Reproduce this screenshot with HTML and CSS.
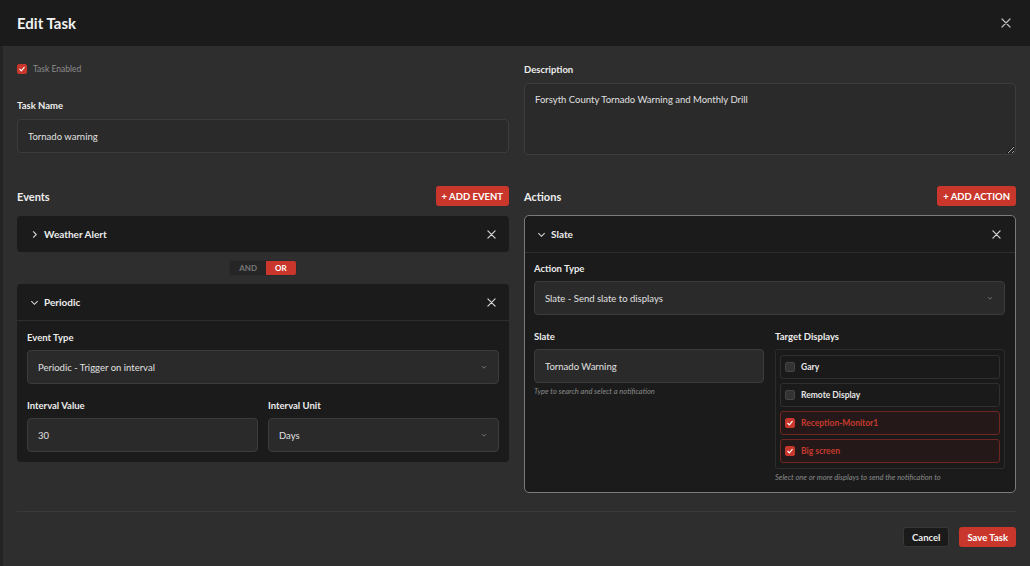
FILE: index.html
```html
<!DOCTYPE html>
<html>
<head>
  <link rel="stylesheet" href="styles.css">
</head>
<body>
  <div class="modal">
    <header class="modal-header">
      <h1>Edit Task</h1>
      <button class="icon-btn close-btn">
        <svg width="10" height="10" viewBox="0 0 10 10"><path d="M1 1L9 9M9 1L1 9" /></svg>
      </button>
    </header>

    <div class="modal-body">
      <div class="grid">
        <div class="col">
          <label class="check-row">
            <span class="check on"><svg viewBox="0 0 10 10"><path d="M2.2 5.3l2 2L7.8 3" /></svg></span>
            Task Enabled
          </label>
          <div class="field name-field">
            <label class="label">Task Name</label>
            <input class="input" type="text" value="Tornado warning">
          </div>
        </div>

        <div class="col">
          <div class="field">
            <label class="label">Description</label>
            <textarea class="input textarea">Forsyth County Tornado Warning and Monthly Drill</textarea>
          </div>
        </div>

        <!-- Events -->
        <section class="section">
          <div class="section-head">
            <h2>Events</h2>
            <button class="btn btn-red">+ ADD EVENT</button>
          </div>

          <div class="card">
            <div class="card-head collapsed">
              <svg class="chev" viewBox="0 0 10 10"><path d="M3.5 1.5L7 5l-3.5 3.5" /></svg>
              <span class="card-title">Weather Alert</span>
              <button class="icon-btn"><svg width="9" height="9" viewBox="0 0 10 10"><path d="M1 1L9 9M9 1L1 9" /></svg></button>
            </div>
          </div>

          <div class="toggle">
            <span class="toggle-opt">AND</span>
            <span class="toggle-opt active">OR</span>
          </div>

          <div class="card">
            <div class="card-head">
              <svg class="chev" viewBox="0 0 10 10"><path d="M1.5 3.5L5 7l3.5-3.5" /></svg>
              <span class="card-title">Periodic</span>
              <button class="icon-btn"><svg width="9" height="9" viewBox="0 0 10 10"><path d="M1 1L9 9M9 1L1 9" /></svg></button>
            </div>
            <div class="card-body">
              <div class="field">
                <label class="label">Event Type</label>
                <div class="input select">
                  <span>Periodic - Trigger on interval</span>
                  <svg class="select-chev" viewBox="0 0 10 10"><path d="M2.5 4L5 6.5 7.5 4" /></svg>
                </div>
              </div>
              <div class="row-2">
                <div class="field">
                  <label class="label">Interval Value</label>
                  <input class="input" type="text" value="30">
                </div>
                <div class="field">
                  <label class="label">Interval Unit</label>
                  <div class="input select">
                    <span>Days</span>
                    <svg class="select-chev" viewBox="0 0 10 10"><path d="M2.5 4L5 6.5 7.5 4" /></svg>
                  </div>
                </div>
              </div>
            </div>
          </div>
        </section>

        <!-- Actions -->
        <section class="section">
          <div class="section-head">
            <h2>Actions</h2>
            <button class="btn btn-red">+ ADD ACTION</button>
          </div>

          <div class="card card-active">
            <div class="card-head">
              <svg class="chev" viewBox="0 0 10 10"><path d="M1.5 3.5L5 7l3.5-3.5" /></svg>
              <span class="card-title">Slate</span>
              <button class="icon-btn"><svg width="9" height="9" viewBox="0 0 10 10"><path d="M1 1L9 9M9 1L1 9" /></svg></button>
            </div>
            <div class="card-body">
              <div class="field">
                <label class="label">Action Type</label>
                <div class="input select">
                  <span>Slate - Send slate to displays</span>
                  <svg class="select-chev" viewBox="0 0 10 10"><path d="M2.5 4L5 6.5 7.5 4" /></svg>
                </div>
              </div>
              <div class="row-2">
                <div class="field">
                  <label class="label">Slate</label>
                  <input class="input" type="text" value="Tornado Warning">
                  <p class="hint">Type to search and select a notification</p>
                </div>
                <div class="field">
                  <label class="label">Target Displays</label>
                  <div class="display-list">
                    <label class="display"><span class="check"></span>Gary</label>
                    <label class="display"><span class="check"></span>Remote Display</label>
                    <label class="display selected">
                      <span class="check on"><svg viewBox="0 0 10 10"><path d="M2.2 5.3l2 2L7.8 3" /></svg></span>
                      Reception-Monitor1
                    </label>
                    <label class="display selected">
                      <span class="check on"><svg viewBox="0 0 10 10"><path d="M2.2 5.3l2 2L7.8 3" /></svg></span>
                      Big screen
                    </label>
                  </div>
                  <p class="hint">Select one or more displays to send the notification to</p>
                </div>
              </div>
            </div>
          </div>
        </section>
      </div>

      <footer class="modal-footer">
        <button class="btn btn-dark">Cancel</button>
        <button class="btn btn-red btn-save">Save Task</button>
      </footer>
    </div>
  </div>
</body>
</html>
```

FILE: styles.css
```css
* {
  box-sizing: border-box;
}

html, body {
  margin: 0;
  height: 100%;
}

body {
  font-family: Lato, "Liberation Sans", sans-serif;
  background-color: #2e2e2e;
  color: #e6e6e6;
}

.modal {
  width: 1030px;
  height: 566px;
  display: flex;
  flex-direction: column;
  background-color: #2e2e2e;
}

/* Header */
.modal-header {
  height: 46px;
  flex-shrink: 0;
  display: flex;
  align-items: center;
  justify-content: space-between;
  padding: 0 19px 0 17px;
  background-color: #1b1b1b;
}

.modal-header h1 {
  margin: 0;
  font-size: 15px;
  font-weight: 700;
  color: #f2f2f2;
}

.icon-btn {
  background: none;
  border: none;
  padding: 0;
  display: flex;
  cursor: pointer;
}

.icon-btn svg {
  fill: none;
  stroke: #d8d8d8;
  stroke-width: 1.3;
  stroke-linecap: round;
}

.close-btn svg {
  stroke: #bdbdbd;
  stroke-width: 1.2;
}

/* Body */
.modal-body {
  flex: 1;
  padding: 18px 14px 0 14px;
  border-left: 3px solid #242424;
}

.grid {
  display: grid;
  grid-template-columns: 1fr 1fr;
  grid-template-rows: 90px auto;
  column-gap: 15px;
  row-gap: 32px;
}

.col {
  display: flex;
  flex-direction: column;
}

.check-row {
  display: flex;
  align-items: center;
  gap: 6px;
  height: 10px;
  font-size: 8.5px;
  color: #8c8c8c;
}

.check {
  width: 10px;
  height: 10px;
  flex-shrink: 0;
  border-radius: 2px;
  background-color: #333;
  border: 1px solid #454545;
  display: flex;
  align-items: center;
  justify-content: center;
}

.check.on {
  background-color: #c9372c;
  border-color: #c9372c;
}

.check svg {
  width: 10px;
  height: 10px;
  fill: none;
  stroke: #fff;
  stroke-width: 1.4;
  stroke-linecap: round;
  stroke-linejoin: round;
}

.name-field {
  margin-top: 26px;
}

.field {
  display: flex;
  flex-direction: column;
}

.label {
  font-size: 9.5px;
  font-weight: 700;
  line-height: 12px;
  color: #ececec;
  margin-bottom: 7px;
}

.input {
  height: 34px;
  width: 100%;
  padding: 0 10px;
  font-family: inherit;
  font-size: 9.5px;
  color: #e0e0e0;
  background-color: #2a2a2a;
  border: 1px solid #3c3c3c;
  border-radius: 4px;
  outline: none;
}

.textarea {
  height: 72px;
  padding: 9px 10px;
  resize: vertical;
  line-height: 14px;
}

.select {
  display: flex;
  align-items: center;
  justify-content: space-between;
}

.select-chev {
  width: 8px;
  height: 8px;
  fill: none;
  stroke: #8a8a8a;
  stroke-width: 1;
}

/* Sections */
.section-head {
  display: flex;
  align-items: center;
  justify-content: space-between;
  height: 20px;
  margin-bottom: 10px;
}

.section-head h2 {
  margin: 0;
  font-size: 11px;
  font-weight: 700;
  color: #ededed;
}

.btn {
  height: 20px;
  padding: 0 7px;
  font-family: inherit;
  font-size: 9.5px;
  font-weight: 700;
  border: none;
  border-radius: 3px;
  cursor: pointer;
}

.section-head .btn {
  padding: 0 6px;
}

.btn-red {
  background-color: #c9372c;
  color: #fff;
}

.btn-dark {
  background-color: #1a1a1a;
  border: 1px solid #383838;
  color: #ededed;
}

.card {
  background-color: #1b1b1b;
  border-radius: 4px;
}

.card-active {
  border: 1px solid #7a7a7a;
  border-radius: 5px;
  margin-top: -1px;
}

.card-head {
  height: 37px;
  display: flex;
  align-items: center;
  padding: 0 13px 0 13px;
  border-bottom: 1px solid #2e2e2e;
}

.card-head.collapsed {
  height: 36px;
  border-bottom: none;
}

.chev {
  width: 9px;
  height: 9px;
  fill: none;
  stroke: #d8d8d8;
  stroke-width: 1.2;
  margin-right: 5px;
}

.card-title {
  flex: 1;
  font-size: 10px;
  font-weight: 700;
  color: #ececec;
}

.card-body {
  padding: 11px 10px 10px 10px;
}

.card-body .label {
  margin-bottom: 6px;
}

.row-2 {
  display: grid;
  grid-template-columns: 1fr 1fr;
  column-gap: 10px;
  margin-top: 16px;
}

.card-active .card-head {
  padding: 0 14px 0 12px;
}

.card-active .card-body {
  padding: 10px 10px 10px 9px;
}

.card-active .row-2 {
  column-gap: 11px;
}

/* AND / OR */
.toggle {
  display: flex;
  width: max-content;
  margin: 8px auto;
  border: 1px solid #2a2a2a;
  border-radius: 3px;
  overflow: hidden;
}

.toggle-opt {
  height: 14px;
  line-height: 14px;
  padding: 0 9px;
  font-size: 8px;
  font-weight: 700;
  color: #777;
  background-color: #262626;
}

.toggle-opt.active {
  background-color: #c9372c;
  color: #fff;
}

/* Target displays */
.display-list {
  display: flex;
  flex-direction: column;
  gap: 4px;
  padding: 5px 4px;
  background-color: #1a1a1a;
  border: 1px solid #2c2c2c;
  border-radius: 3px;
}

.display {
  height: 24px;
  display: flex;
  align-items: center;
  gap: 6px;
  padding: 0 4px;
  font-size: 8.5px;
  font-weight: 700;
  color: #e6e6e6;
  border: 1px solid #2f2f2f;
  border-radius: 3px;
}

.display.selected {
  color: #c53a2f;
  background-color: #241918;
  border-color: #6e2620;
}

.hint {
  margin: 4px 0 0 0;
  font-size: 7.5px;
  font-style: italic;
  color: #8a8a8a;
}

/* Footer */
.modal-footer {
  margin-top: 18px;
  padding-top: 15px;
  border-top: 1px solid #3a3a3a;
  display: flex;
  justify-content: flex-end;
  gap: 10px;
}

.modal-footer .btn {
  height: 20px;
  font-size: 9.5px;
  padding: 0 8px;
}
```
